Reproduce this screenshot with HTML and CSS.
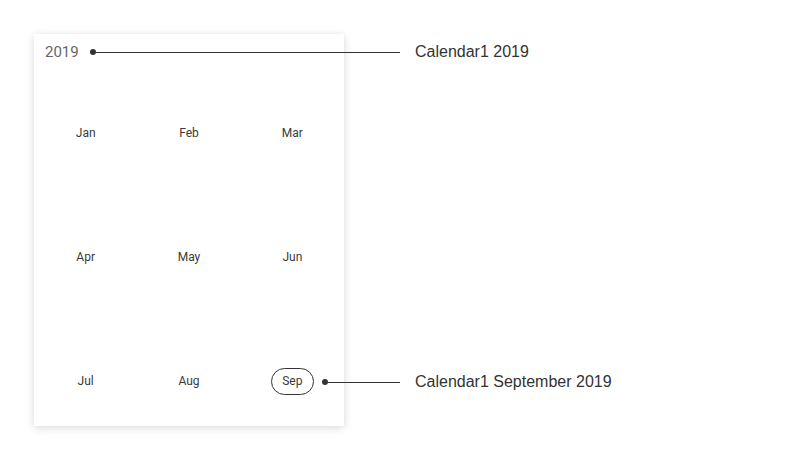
FILE: index.html
```html
<!DOCTYPE html>
<html>
<head>
    <meta charset="utf-8" />
    <title>Calendar</title>
    <link rel="stylesheet" href="styles.css">
</head>
<body>
    <div class="calendar">
        <div class="yearHeader">2019</div>
        <div class="monthGrid">
            <div class="month">Jan</div>
            <div class="month">Feb</div>
            <div class="month">Mar</div>
            <div class="month">Apr</div>
            <div class="month">May</div>
            <div class="month">Jun</div>
            <div class="month">Jul</div>
            <div class="month">Aug</div>
            <div class="month"><span class="selected">Sep</span></div>
        </div>
    </div>

    <div class="callout calloutYear">
        <span class="dot"></span><span class="line"></span>
        <span class="calloutText">Calendar1 2019</span>
    </div>
    <div class="callout calloutSep">
        <span class="dot"></span><span class="line"></span>
        <span class="calloutText">Calendar1 September 2019</span>
    </div>
</body>
</html>
```

FILE: styles.css
```css
* {
    box-sizing: border-box;
}

body {
    margin: 0;
    padding: 34px 0 37px 34px;
    background: #fff;
    font-family: Roboto, "Liberation Sans", sans-serif;
}

.calendar {
    width: 310px;
    height: 392px;
    overflow: hidden;
    background: #fff;
    box-shadow: 0 2px 9px rgba(0, 0, 0, 0.14), 0 0 3px rgba(0, 0, 0, 0.04);
}

.yearHeader {
    height: 37px;
    padding: 9px 0 0 11px;
    font-size: 15px;
    color: #666;
}

/* last row runs past the card edge, content stays centred like the source */
.monthGrid {
    display: grid;
    grid-template-columns: repeat(3, 1fr);
    grid-auto-rows: 124px;
}

.month {
    display: flex;
    align-items: center;
    justify-content: center;
    font-size: 12px;
    color: #3a3a3a;
}

.selected {
    display: inline-flex;
    align-items: center;
    justify-content: center;
    width: 43px;
    height: 27px;
    border: 1px solid #333;
    border-radius: 14px;
}

.callout {
    position: absolute;
    display: flex;
    align-items: center;
}

.calloutYear {
    left: 90px;
    top: 43px;
}

.calloutSep {
    left: 322px;
    top: 373px;
}

.dot {
    width: 6px;
    height: 6px;
    border-radius: 50%;
    background: #333;
}

.calloutYear .line {
    width: 304px;
}

.calloutSep .line {
    width: 72px;
}

.line {
    height: 1px;
    background: #333;
}

.calloutText {
    margin-left: 15px;
    font-family: "Liberation Sans", Arial, sans-serif;
    font-size: 16px;
    color: #333;
}
```
